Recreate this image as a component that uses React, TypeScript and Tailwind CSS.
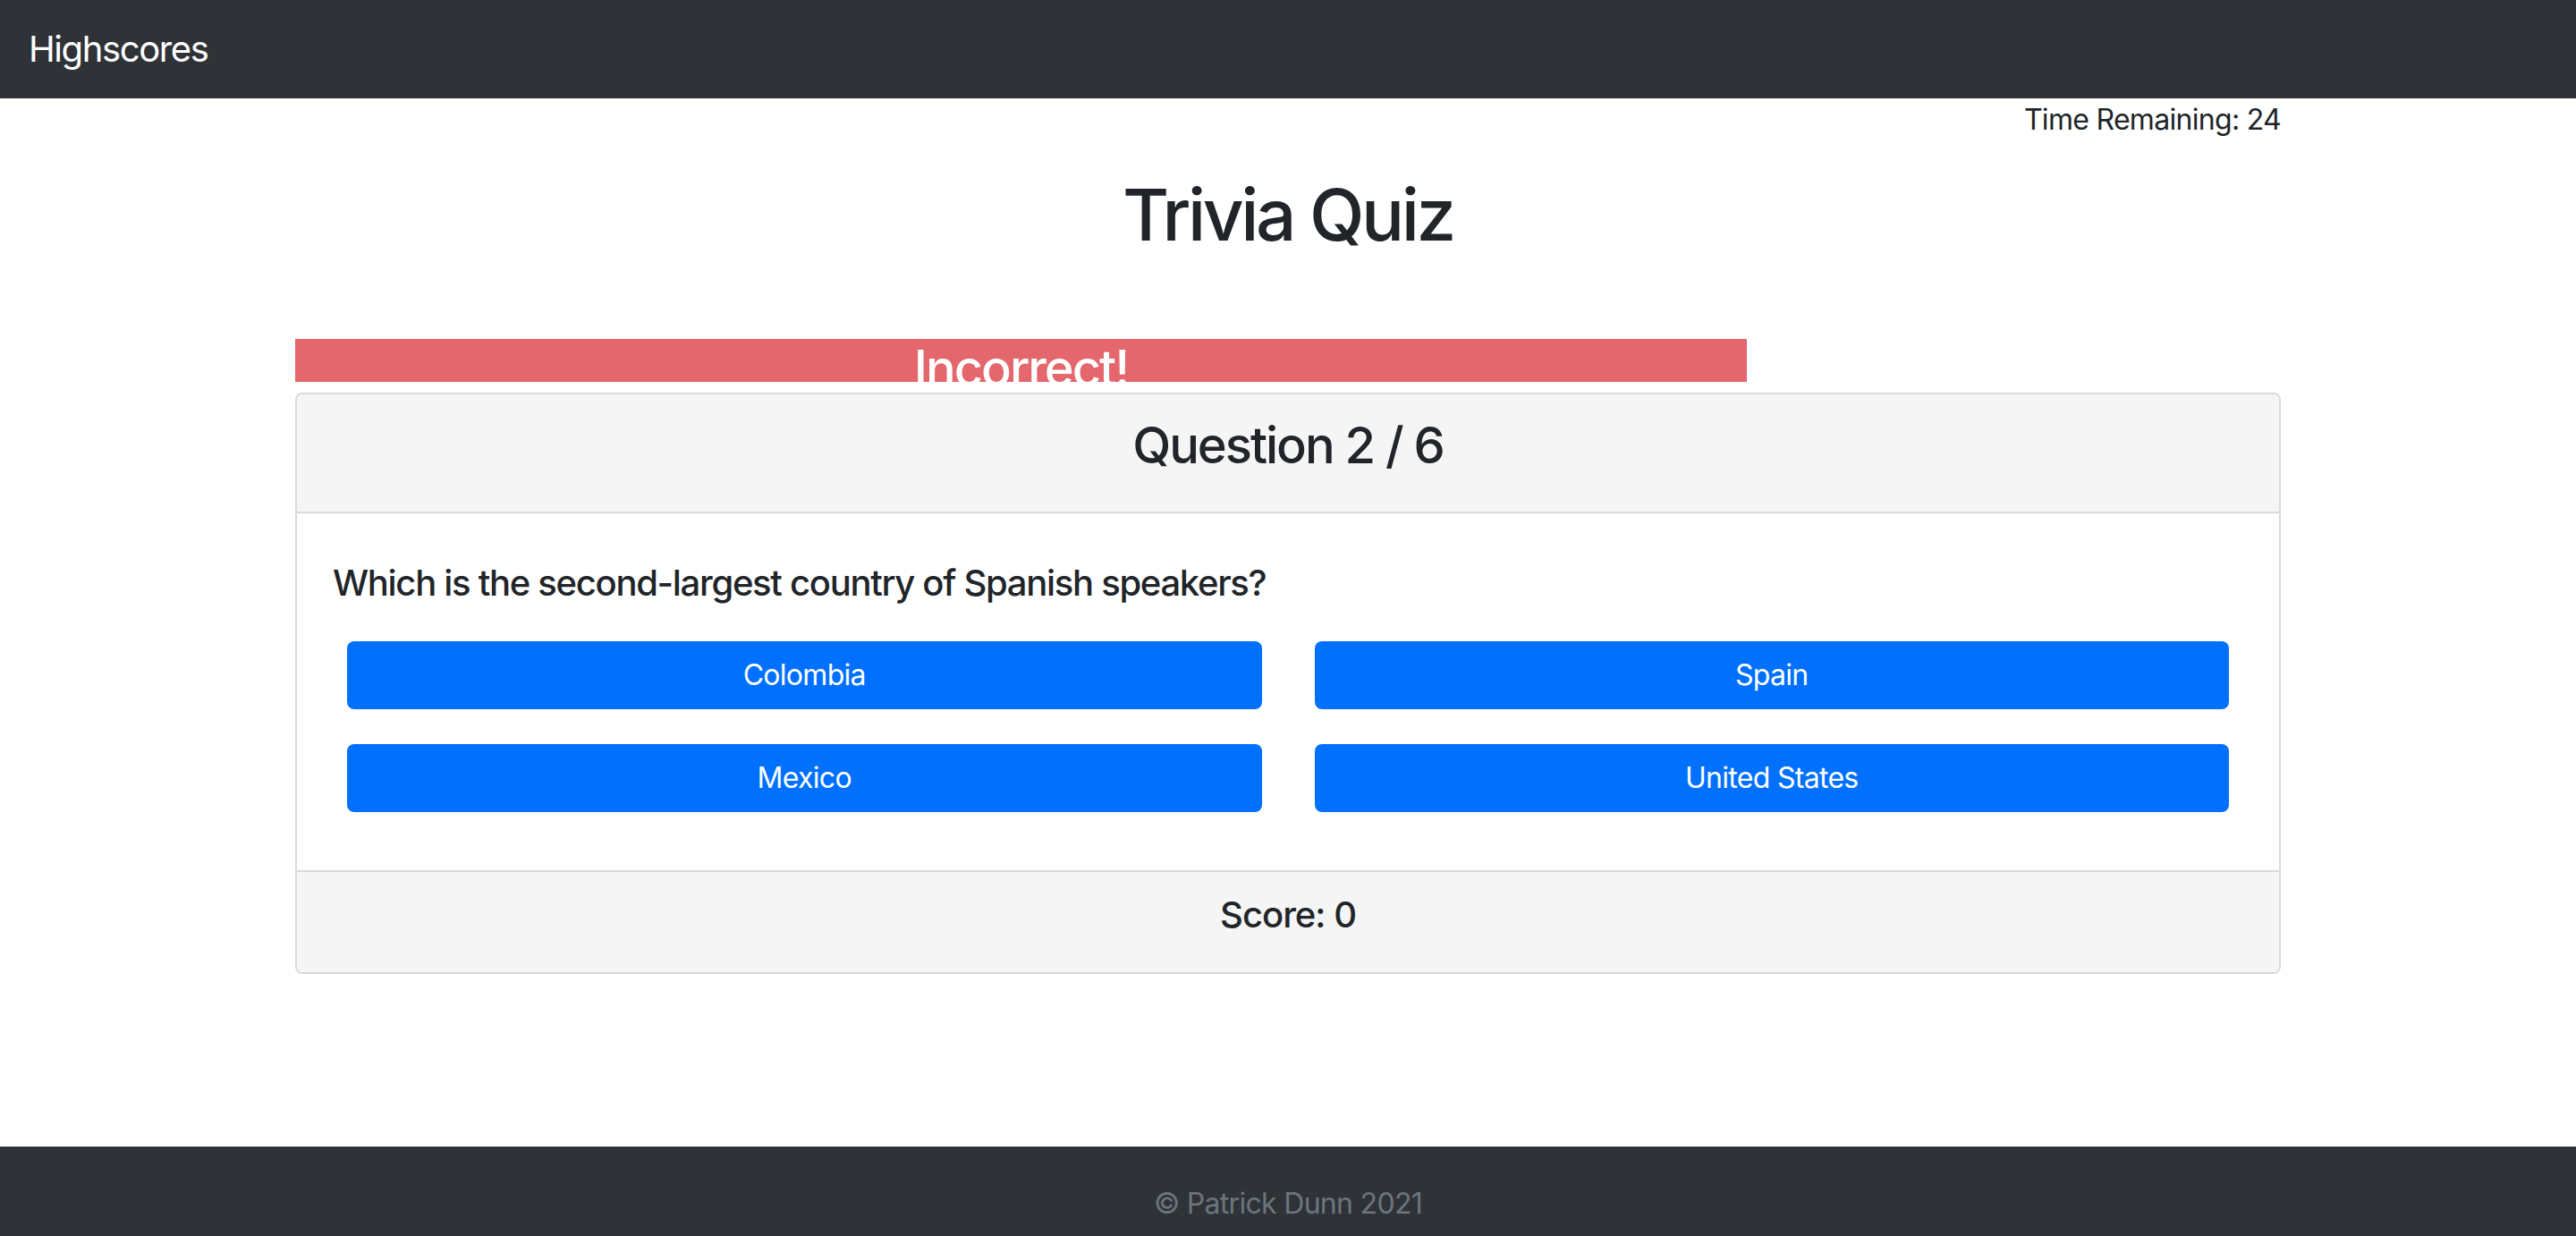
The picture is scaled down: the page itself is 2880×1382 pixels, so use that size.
const answers = ['Colombia', 'Spain', 'Mexico', 'United States'];

export default function App() {
  return (
    <div className="min-h-screen bg-white text-[#212529] font-['Inter','Liberation_Sans',sans-serif]">
      <nav className="h-[110px] bg-[#2f3337] px-[32px] flex items-center">
        <a href="#" className="text-[40px] leading-[60px] tracking-[-1.4px] text-white">
          Highscores
        </a>
      </nav>

      <main className="pb-[193px]">
        <div className="w-[2220px] mx-auto">
          <div className="text-right text-[32px] leading-[48px] tracking-[-0.7px]">Time Remaining: 24</div>
          <h1 className="mt-[34px] text-center text-[80px] leading-[96px] tracking-[-3.4px] font-medium">
            Trivia Quiz
          </h1>

          <div className="mt-[91px] w-[1623px] h-[48px] bg-[#e4676d] overflow-hidden text-center">
            <h3 className="text-[56px] leading-[67px] tracking-[-2px] font-medium text-white">Incorrect!</h3>
          </div>

          <div className="mt-[12px] border-2 border-[#dadada] rounded-[8px] overflow-hidden">
            <div className="bg-[#f5f5f5] border-b-2 border-[#dadada] px-[40px] py-[24px] text-center">
              <h3 className="text-[56px] leading-[67px] tracking-[-2px] font-medium mb-[16px]">Question 2 / 6</h3>
            </div>

            <div className="px-[40px] pt-[54px] pb-[65px]">
              <h5 className="text-[40px] leading-[48px] tracking-[-1.3px] font-medium mb-[41px]">
                Which is the second-largest country of Spanish speakers?
              </h5>
              <div className="grid grid-cols-2 gap-x-[59px] gap-y-[39px] px-[16px]">
                {answers.map(a => (
                  <button
                    key={a}
                    type="button"
                    className="h-[76px] rounded-[8px] bg-[#0070ff] text-white text-[32px] leading-[48px] tracking-[-0.7px]"
                  >
                    {a}
                  </button>
                ))}
              </div>
            </div>

            <div className="bg-[#f5f5f5] border-t-2 border-[#dadada] px-[40px] py-[24px] text-center">
              <h5 className="text-[40px] leading-[48px] tracking-[-1px] font-medium mb-[16px]">Score: 0</h5>
            </div>
          </div>
        </div>
      </main>

      <footer className="bg-[#2f3337] py-[40px] text-center">
        <p className="text-[32px] leading-[48px] tracking-[-0.7px] text-[#6c757d]">© Patrick Dunn 2021</p>
      </footer>
    </div>
  );
}
